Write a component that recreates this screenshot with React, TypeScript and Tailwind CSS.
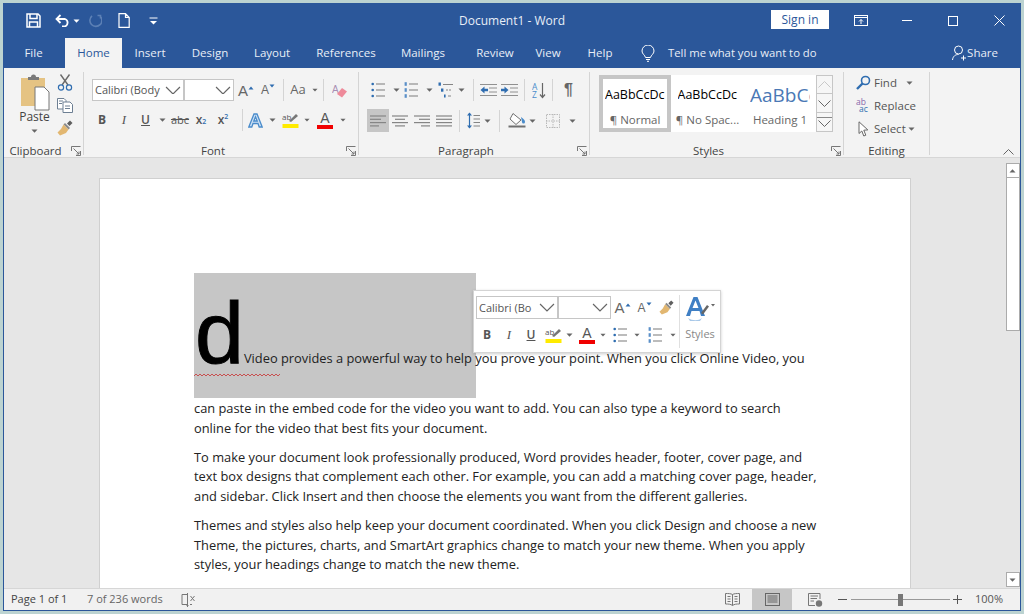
import React from "react";

const F = "font-['Open_Sans','Noto_Sans',sans-serif]";

type P = { c?: string; children?: React.ReactNode };
const C = ({ c = "", children }: P) => (
  <div className={"flex items-center justify-center shrink-0 " + c}>{children}</div>
);
const Sep = ({ c = "h-[22px]" }: { c?: string }) => <div className={"w-px shrink-0 bg-[#d4d4d4] " + c} />;
const Caret = ({ color = "#666" }: { color?: string }) => (
  <svg width="7" height="4" viewBox="0 0 7 4"><path d="M0.5 0.5h6L3.5 3.8z" fill={color} /></svg>
);
const Chevron = ({ w = 16, h = 9 }: { w?: number; h?: number }) => (
  <svg className="shrink-0" width={w} height={h} viewBox="0 0 16 9" fill="none"><path d="M1 1l7 7 7-7" stroke="#666" strokeWidth="1.2" /></svg>
);
const Launcher = () => (
  <svg width="10" height="10" viewBox="0 0 10 10" fill="none" stroke="#777">
    <path d="M0.5 5V0.5H9.5M5 9.5H9.5V5M2.5 2.5L8 8M8 5.5V8H5.5" />
  </svg>
);

const Lines = ({ kind }: { kind: "left" | "center" | "right" | "just" }) => {
  const rows = {
    left: [[2, 18], [2, 13], [2, 18], [2, 11]],
    center: [[2, 18], [5, 15], [2, 18], [5, 15]],
    right: [[2, 18], [7, 18], [2, 18], [9, 18]],
    just: [[2, 18], [2, 18], [2, 18], [2, 18]],
  }[kind];
  return (
    <svg width="16" height="14" viewBox="2 0 16 14" stroke="#858585" strokeWidth="1.2">
      {rows.map(([a, b], i) => <path key={i} d={`M${a} ${2 + i * 3.3}H${b}`} />)}
    </svg>
  );
};
const Bullets = ({ s = 1 }: { s?: number }) => (
  <svg width={14 * s} height={16 * s} viewBox="0 0 14 16">
    {[2, 8, 14].map((y) => <g key={y}><circle cx="1.7" cy={y} r="1.3" fill="#2f6db0" /><path d={`M5 ${y}H14`} stroke="#858585" strokeWidth="1.1" /></g>)}
  </svg>
);
const Numbers = ({ s = 1 }: { s?: number }) => (
  <svg width={14 * s} height={16 * s} viewBox="0 0 14 16">
    {[2, 8, 14].map((y) => <g key={y}><rect x="0.6" y={y - 1.8} width="2.2" height="3.6" fill="#5a8fc8" /><path d={`M5 ${y}H14`} stroke="#858585" strokeWidth="1.1" /></g>)}
  </svg>
);
const Multi = () => (
  <svg width="16" height="16" viewBox="0 0 16 16">
    <rect x="0.5" y="0.5" width="2.4" height="3.2" fill="#2f6db0" /><path d="M5 2.5H15" stroke="#858585" />
    <rect x="3" y="6.5" width="2.4" height="3.2" fill="#2f6db0" /><path d="M8 8H10M11 8H13" stroke="#858585" />
    <rect x="6" y="12.5" width="1.6" height="3" fill="#2f6db0" /><path d="M10 14H13" stroke="#858585" />
  </svg>
);
const Indent = ({ flip }: { flip?: boolean }) => (
  <svg width="17" height="14" viewBox="0 0 17 14">
    <g stroke="#909090"><path d="M0 1.5H17M9 5H17M9 9H17M0 12.5H17" /></g>
    {flip
      ? <path d="M0 5.7H3.5V3.5L7.5 7 3.5 10.5V8.3H0z" fill="#2f6db0" />
      : <path d="M8 5.7H4.5V3.5L0.5 7 4.5 10.5V8.3H8z" fill="#2f6db0" />}
  </svg>
);
const Brush = ({ s = 16 }: { s?: number }) => (
  <svg width={s} height={s} viewBox="0 0 16 16">
    <path d="M10 3.5l3-3 2.5 2.5-3 3z" fill="#5f5f5f" />
    <path d="M8 3l5 5-1.5 1.5-5-5z" fill="#8a8a8a" />
    <path d="M6.5 4.5l5 5-2.5 3.5L3 15.5 .5 12.5 4 9z" fill="#e2b771" />
  </svg>
);
const GrowA = ({ big, up }: { big?: boolean; up?: boolean }) => (
  <div className="relative flex items-end">
    <span className={"leading-none text-[#666] font-['Liberation_Sans',sans-serif] " + (big ? "text-[15px]" : "text-[12px]")}>A</span>
    <svg className="mb-[8px]" width="6" height="4" viewBox="0 0 6 4">
      <path d={up ? "M0.5 3.5L3 0.5l2.5 3z" : "M0.5 0.5L3 3.5l2.5-3z"} fill="#2f6db0" />
    </svg>
  </div>
);
const Highlight = () => (
  <svg width="17" height="16" viewBox="0 0 17 16" className="overflow-visible">
    <text x="0" y="8" fontSize="8" fill="#555" fontFamily="'Open Sans',sans-serif">ab</text>
    <path d="M7 9l7-7 2 2-7 6z" fill="#777" />
    <rect x="0.5" y="12" width="16" height="4" fill="#ffeb00" />
  </svg>
);
const ColorA = () => (
  <div className="flex flex-col items-center w-[16px]">
    <span className="text-[14px] leading-[13px] text-[#555] font-['Liberation_Sans',sans-serif]">A</span>
    <div className="w-[16px] h-[4px] bg-[#f00000]" />
  </div>
);
const Combo = ({ c, text, chevron = 16 }: { c: string; text?: string; chevron?: number }) => (
  <div className={"flex items-center justify-between bg-white border border-[#c6c6c6] pl-[2px] pr-[2px] text-[#555] text-[11px] overflow-hidden " + c}>
    <span className="whitespace-nowrap">{text}</span>
    <Chevron w={chevron} h={chevron * 0.56} />
  </div>
);

const Group = ({ c, label, launcher, children }: P & { label: string; launcher?: boolean }) => (
  <div className={"flex flex-col shrink-0 relative " + c}>
    <div className="flex-1 min-h-0">{children}</div>
    <div className={"h-[12px] flex items-center justify-center text-[11.5px] text-[#444] relative " + (launcher ? "pr-[16px]" : "")}>
      {label}
      {launcher && <span className="absolute right-[2px] top-[1px]"><Launcher /></span>}
    </div>
  </div>
);

const Clipboard = () => (
  <Group c="w-[79px] pt-[2px]" label="Clipboard" launcher>
    <div className="flex h-[65px]">
      <div className="w-[53px] ml-[4px] flex flex-col items-center">
        <svg width="30" height="37" viewBox="0 0 30 37">
          <rect x="1" y="4" width="24" height="28" fill="#e5c383" />
          <path d="M8 6V3h3a2.5 2.5 0 0 1 5 0h3v3z" fill="#7a7a7a" />
          <path d="M15 13h9l5 5v18H15z" fill="#fff" stroke="#777" />
        </svg>
        <span className="text-[12px] leading-[15px] mt-[-2px] text-[#444]">Paste</span>
        <div className="mt-[5px]"><Caret /></div>
      </div>
      <div className="flex flex-col items-center w-[16px] ml-[-4px]">
        <svg className="mt-0" width="16" height="17" viewBox="0 0 16 17" fill="none">
          <path d="M3.5 0.5L11 11M12.5 0.5L5 11" stroke="#6a6a6a" strokeWidth="1.4" />
          <circle cx="4" cy="13.5" r="2.6" stroke="#2f6db0" strokeWidth="1.2" />
          <circle cx="12" cy="13.5" r="2.6" stroke="#2f6db0" strokeWidth="1.2" />
        </svg>
        <svg className="mt-[7px]" width="16" height="15" viewBox="0 0 16 15" fill="#fff" stroke="#6d7f93">
          <path d="M0.5 0.5H7L9 2.5V11H0.5z" /><path d="M6 4H13L15.5 6.5V14.5H6z" />
          <path d="M8 8H13M8 10.5H13M2 3H6M2 5.5H5" />
        </svg>
        <div className="mt-[7px]"><Brush /></div>
      </div>
    </div>
  </Group>
);

const FontGroup = () => (
  <Group c="w-[274px] pt-[7px] text-[12px]" label="Font" launcher>
    <div className="flex items-center h-[22px] pl-[8px]">
      <Combo c="w-[92px] h-[22px]" text="Calibri (Body" />
      <Combo c="w-[50px] h-[22px]" />
      <C c="w-[24px]"><GrowA big up /></C>
      <C c="w-[20px]"><GrowA /></C>
      <div className="w-[5px]" /><Sep />
      <C c="w-[28px] text-[13px] text-[#666] gap-[3px]"><span>Aa</span></C>
      <C c="w-[6px]"><Caret /></C>
      <div className="w-[5px]" /><Sep />
      <C c="w-[31px]">
        <svg width="15" height="15" viewBox="0 0 15 15">
          <text x="0" y="10" fontSize="10" fill="#a98fb4" fontFamily="'Liberation Sans',sans-serif">A</text>
          <path d="M10 5l5 3.5-5 6-5-3.5z" fill="#ee8a9a" />
        </svg>
      </C>
    </div>
    <div className="flex items-center h-[22px] mt-[8px] pl-[7px] text-[#555]">
      <C c="w-[22px] font-bold text-[12px]">B</C>
      <C c="w-[22px] italic font-['Liberation_Serif',serif] text-[13px]">I</C>
      <C c="w-[21px] underline font-semibold text-[12px]">U</C>
      <C c="w-[12px]"><Caret /></C>
      <C c="w-[24px] line-through text-[11px]">abc</C>
      <C c="w-[18px] font-semibold text-[12px]">x<sub className="text-[7px] text-[#2f6db0]">2</sub></C>
      <C c="w-[26px] font-semibold text-[12px]">x<sup className="text-[7px] text-[#2f6db0]">2</sup></C>
      <div className="w-[6px]" /><Sep />
      <C c="w-[25px]">
        <svg width="15" height="15" viewBox="0 0 15 15" fill="#cfe1f4" stroke="#4a8ccb" strokeWidth="1.3"><path d="M0.8 14L6 1h3l5.2 13h-3L10 10.5H5L3.8 14zM5.8 8h3.4L7.5 3.8z" /></svg>
      </C>
      <C c="w-[8px]"><Caret /></C>
      <C c="w-[28px]"><Highlight /></C>
      <C c="w-[6px]"><Caret /></C>
      <C c="w-[30px]"><ColorA /></C>
      <C c="w-[6px]"><Caret /></C>
    </div>
  </Group>
);

const ParagraphGroup = () => (
  <Group c="w-[230px] pt-[7px]" label="Paragraph" launcher>
    <div className="flex items-center h-[22px] pl-[11px]">
      <C c="w-[16px]"><Bullets /></C>
      <C c="w-[17px] pl-[3px]"><Caret /></C>
      <C c="w-[16px]"><Numbers /></C>
      <C c="w-[18px] pl-[3px]"><Caret /></C>
      <C c="w-[18px]"><Multi /></C>
      <C c="w-[12px]"><Caret /></C>
      <div className="w-[6px]" /><Sep />
      <C c="w-[24px] pl-[5px]"><Indent /></C>
      <C c="w-[23px]"><Indent flip /></C>
      <div className="w-[3px]" /><Sep />
      <C c="w-[27px]">
        <svg width="14" height="17" viewBox="0 0 14 17">
          <text x="0" y="7.5" fontSize="8.5" fill="#4a8ccb" fontFamily="'Open Sans',sans-serif">A</text>
          <text x="0" y="16" fontSize="8.5" fill="#4a8ccb" fontFamily="'Open Sans',sans-serif">Z</text>
          <path d="M10.5 1v14M8 12.5l2.5 3 2.5-3" stroke="#666" strokeWidth="1.2" fill="none" />
        </svg>
      </C>
      <Sep />
      <C c="w-[31px] text-[16px] text-[#666] font-bold font-['Liberation_Sans',sans-serif]">¶</C>
    </div>
    <div className="flex items-center h-[23px] mt-[8px] pl-[8px]">
      <C c="w-[22px] h-[23px] bg-[#c6c6c6]"><Lines kind="left" /></C>
      <C c="w-[22px]"><Lines kind="center" /></C>
      <C c="w-[22px]"><Lines kind="right" /></C>
      <C c="w-[22px]"><Lines kind="just" /></C>
      <div className="w-[4px]" /><Sep />
      <C c="w-[23px] pl-[3px]">
        <svg width="13" height="17" viewBox="0 0 13 17">
          <path d="M2.5 1v15" stroke="#2f6db0" strokeWidth="1.2" />
          <path d="M0 3.5L2.5 0.5 5 3.5zM0 13.5L2.5 16.5 5 13.5z" fill="#2f6db0" />
          <path d="M6.5 3.5H13M6.5 7H13M6.5 10.5H13M6.5 14H13" stroke="#858585" />
        </svg>
      </C>
      <C c="w-[9px]"><Caret /></C>
      <div className="w-[7px]" /><Sep />
      <C c="w-[28px] pl-[5px]">
        <svg width="18" height="17" viewBox="0 0 18 17" fill="none">
          <path d="M5 1.5L13 8l-5 4.5L2 7z" stroke="#707070" fill="#fff" />
          <path d="M13 5c3 2 4 3.5 4 5a1.5 1.5 0 0 1-3 0z" fill="#4a8ccb" />
          <path d="M0.5 14.5H17.5" stroke="#707070" strokeWidth="2" />
        </svg>
      </C>
      <C c="w-[8px]"><Caret /></C>
      <C c="w-[25px] pl-[8px]">
        <svg width="14" height="14" viewBox="0 0 14 14" fill="none" stroke="#b8b8b8" strokeDasharray="1.5 1"><rect x="0.5" y="0.5" width="13" height="13" /><path d="M7 0V14M0 7H14" /></svg>
      </C>
      <C c="w-[16px] pl-[6px]"><Caret /></C>
    </div>
  </Group>
);

const ScrollBtn = ({ c, dim, up, bar }: { c: string; dim?: boolean; up?: boolean; bar?: boolean }) => (
  <div className={"w-[17px] border border-[#c6c6c6] flex flex-col items-center justify-center bg-[#f6f6f6] " + c}>
    {bar && <div className="w-full h-px bg-[#888] mb-[2px]" />}
    <svg width="13" height="7" viewBox="0 0 13 7" fill="none">
      <path d={up ? "M0.5 6.5l6-6 6 6" : "M0.5 0.5l6 6 6-6"} stroke={dim ? "#c8c8c8" : "#666"} />
    </svg>
  </div>
);

const StylesGroup = () => (
  <Group c="w-[253px] pt-[3px]" label="Styles" launcher>
    <div className="flex ml-[9px] w-[234px] h-[57px]">
      <div className="w-[72px] h-[57px] border-[4px] border-[#c6c6c6] bg-white flex flex-col items-center overflow-hidden">
        <div className="h-[33px] w-[60px] flex items-center overflow-hidden text-[12.5px] text-black whitespace-nowrap">AaBbCcDc</div>
        <span className="text-[11.5px] leading-[16px] text-[#666] whitespace-nowrap">¶ Normal</span>
      </div>
      <div className="w-[73px] h-[57px] bg-white flex flex-col items-center overflow-hidden">
        <div className="h-[37px] w-[60px] pt-[4px] flex items-center overflow-hidden text-[12.5px] text-black whitespace-nowrap">AaBbCcDc</div>
        <span className="text-[11.5px] leading-[16px] text-[#666] whitespace-nowrap">¶ No Spac...</span>
      </div>
      <div className="w-[72px] h-[57px] bg-white flex flex-col items-center overflow-hidden">
        <div className="h-[37px] w-[60px] pt-[4px] flex items-center overflow-hidden text-[19px] text-[#4a78b5] whitespace-nowrap">AaBbCc</div>
        <span className="text-[11.5px] leading-[16px] text-[#666] whitespace-nowrap">Heading 1</span>
      </div>
      <div className="flex flex-col">
        <ScrollBtn c="h-[19px]" dim up />
        <ScrollBtn c="h-[20px] -mt-px" />
        <ScrollBtn c="h-[20px] -mt-px" bar />
      </div>
    </div>
  </Group>
);

const EditingGroup = () => (
  <Group c="w-[85px] pt-[1px] text-[11.5px] text-[#555]" label="Editing">
    <div className="flex flex-col gap-[4px] pl-[8px]">
      <div className="flex items-center h-[19px]">
        <C c="w-[22px]">
          <svg width="15" height="15" viewBox="0 0 15 15" fill="none" stroke="#2f6db0"><circle cx="9.5" cy="5.5" r="4" strokeWidth="1.6" /><path d="M6.5 8.5L1 14" strokeWidth="2.4" /></svg>
        </C>
        <span>Find</span><span className="ml-[9px]"><Caret /></span>
      </div>
      <div className="flex items-center h-[19px]">
        <C c="w-[22px]">
          <svg width="17" height="17" viewBox="0 0 17 17">
            <text x="1" y="8" fontSize="8.5" fill="#8866aa" fontFamily="'Open Sans',sans-serif">ab</text>
            <text x="4" y="15" fontSize="8.5" fill="#2f6db0" fontFamily="'Open Sans',sans-serif">ac</text>
          </svg>
        </C>
        <span>Replace</span>
      </div>
      <div className="flex items-center h-[19px]">
        <C c="w-[22px]">
          <svg width="11" height="16" viewBox="0 0 11 16" fill="#fff" stroke="#666"><path d="M1 0.8V12.5L3.8 10l2 5 2-0.8-2-5 4 -0.3z" /></svg>
        </C>
        <span>Select</span><span className="ml-[2px]"><Caret /></span>
      </div>
    </div>
  </Group>
);

const Tab = ({ c, children }: P) => <div className={"shrink-0 text-center " + c}>{children}</div>;

const Para = ({ children, c = "" }: P) => <p className={"mb-[9.5px] " + c}>{children}</p>;

const MiniToolbar = () => (
  <div className="absolute left-[373px] top-[111px] w-[248px] h-[63px] bg-white border border-[#d4d4d4] shadow-[0_1px_3px_rgba(0,0,0,0.2)] flex text-[12px] text-[#666]">
    <div className="w-[205px] pl-[2px] pt-[5px]">
      <div className="flex items-center h-[23px]">
        <Combo c="w-[82px] h-[23px]" text="Calibri (Bo" />
        <Combo c="w-[53px] h-[23px]" />
        <C c="w-[23px]"><GrowA big up /></C>
        <C c="w-[21px]"><GrowA /></C>
        <C c="w-[23px]"><Brush s={15} /></C>
      </div>
      <div className="flex items-center h-[22px] mt-[5px]">
        <C c="w-[22px] font-bold text-[#555]">B</C>
        <C c="w-[22px] italic font-['Liberation_Serif',serif] text-[13px] text-[#555]">I</C>
        <C c="w-[22px] underline font-semibold text-[#555]">U</C>
        <C c="w-[22px]"><Highlight /></C>
        <C c="w-[10px]"><Caret /></C>
        <C c="w-[26px]"><ColorA /></C>
        <C c="w-[6px]"><Caret /></C>
        <C c="w-[28px]"><Bullets /></C>
        <C c="w-[6px]"><Caret /></C>
        <C c="w-[30px]"><Numbers /></C>
        <C c="w-[6px]"><Caret /></C>
      </div>
    </div>
    <div className="w-px my-[4px] bg-[#e0e0e0]" />
    <div className="flex-1 flex flex-col items-center pt-[5px]">
      <svg width="30" height="26" viewBox="0 0 30 26">
        <path d="M1 20L8.5 1h4L20 20h-4l-1.5-5h-8L5 20zM7.5 12h6L10.5 4.5z" fill="#3f7fc4" />
        <path d="M3 22c5 3 10 3 14 0l-2 3H5z" fill="#a8c8e8" />
        <path d="M16 17l6-8 2 1.5-6 8z" fill="#666" />
        <path d="M26 8h4l-2 2.5z" fill="#666" />
      </svg>
      <span className="text-[11px] mt-[5px] leading-[14px] text-[#888]">Styles</span>
    </div>
  </div>
);

export default function App() {
  return (
    <div className={"w-[1024px] h-[614px] overflow-hidden bg-[#bcd3d1] pt-[3px] px-[3px] " + F}>
      <div className="h-[608px] flex flex-col bg-[#e6e6e6] border-b border-x border-[#2b579a]">
        {/* title bar */}
        <div className="h-[35px] shrink-0 bg-[#2b579a] flex items-center text-white relative">
          <C c="w-[25px] ml-[17px]">
            <svg width="15" height="15" viewBox="0 0 15 15" fill="none" stroke="#fff" strokeWidth="1.5"><path d="M1 1H12L14 3V14H1z" /><path d="M4 1V5.5H11V1M3.5 14V9H11.5V14" /></svg>
          </C>
          <C c="w-[20px] ml-[7px]">
            <svg width="16" height="13" viewBox="0 0 16 13" fill="none" stroke="#fff" strokeWidth="1.8"><path d="M1.5 5H10a4 4 0 0 1 0 7.5H7" /><path d="M5.5 1L1.5 5l4 4" /></svg>
          </C>
          <C c="w-[8px] ml-[-1px]"><Caret color="#fff" /></C>
          <C c="w-[16px] ml-[7px]">
            <svg width="14" height="14" viewBox="0 0 14 14" fill="none" stroke="#5c80b5" strokeWidth="1.6"><path d="M9.5 1.5H12.5V4.5M12 2A6 6 0 1 1 4 1.8" /></svg>
          </C>
          <C c="w-[16px] ml-[13px]">
            <svg width="12" height="15" viewBox="0 0 12 15" fill="none" stroke="#fff" strokeWidth="1.2"><path d="M1 0.7H7.5L11.2 4.4V14.3H1zM7.5 0.7V4.4H11.2" /></svg>
          </C>
          <C c="w-[10px] ml-[16px]">
            <svg width="9" height="8" viewBox="0 0 9 8" fill="none" stroke="#fff"><path d="M0.5 1H8.5" /><path d="M1 4h7L4.5 7.5z" fill="#fff" stroke="none" /></svg>
          </C>
          <div className="absolute left-[0] right-[0] text-center text-[12px] text-[#e8eef7] pointer-events-none">Document1  -  Word</div>
          <div className="ml-auto flex items-center">
            <div className="w-[58px] h-[19px] -mt-[2px] bg-white text-[#2b579a] text-[12px] flex items-center justify-center">Sign in</div>
            <C c="w-[64px]">
              <svg width="14" height="11" viewBox="0 0 14 11" fill="none" stroke="#fff"><rect x="0.5" y="0.5" width="13" height="10" /><path d="M0.5 2.5H13.5M7 9V4.5M5 6.5l2-2 2 2" /></svg>
            </C>
            <C c="w-[28px]"><div className="w-[10px] h-px bg-white" /></C>
            <C c="w-[64px]"><div className="w-[10px] h-[10px] border border-white" /></C>
            <C c="w-[28px] mr-[7px]">
              <svg width="11" height="11" viewBox="0 0 11 11" stroke="#fff"><path d="M0.5 0.5L10.5 10.5M10.5 0.5L0.5 10.5" /></svg>
            </C>
          </div>
        </div>
        {/* tabs */}
        <div className="h-[30px] shrink-0 bg-[#2b579a] flex items-center text-[11.5px] text-[#e8eef7]">
          <Tab c="w-[61px] pr-[2px]">File</Tab>
          <Tab c="w-[57px] h-[30px] leading-[30px] bg-[#f3f3f3] text-[#2b579a]">Home</Tab>
          <Tab c="w-[56px]">Insert</Tab>
          <Tab c="w-[64px]">Design</Tab>
          <Tab c="w-[60px]">Layout</Tab>
          <Tab c="w-[88px]">References</Tab>
          <Tab c="w-[66px]">Mailings</Tab>
          <Tab c="w-[78px]">Review</Tab>
          <Tab c="w-[28px]">View</Tab>
          <Tab c="w-[76px]">Help</Tab>
          <C c="w-[20px]">
            <svg width="14" height="17" viewBox="0 0 14 17" fill="none" stroke="#fff"><path d="M4.5 12.5C4 10 1 9 1 6a6 6 0 0 1 12 0c0 3-3 4-3.5 6.5zM5 14.5H9M6 16.3H8" /></svg>
          </C>
          <span className="ml-[10px] text-[11.3px]">Tell me what you want to do</span>
          <div className="ml-auto flex items-center mr-[22px]">
            <svg width="15" height="16" viewBox="0 0 15 16" fill="none" stroke="#fff"><circle cx="6.5" cy="5" r="4" /><path d="M0.5 15C1 11 3.5 9.5 6.5 9.5M11.5 10.5V15.5M9 13H14" /></svg>
            <span>Share</span>
          </div>
        </div>
        {/* ribbon */}
        <div className="h-[90px] shrink-0 bg-[#f3f3f3] border-b border-[#d6d6d6] flex items-stretch pt-[4px] relative">
          <Clipboard />
          <Sep c="mb-[2px]" />
          <FontGroup />
          <Sep c="mb-[2px]" />
          <ParagraphGroup />
          <Sep c="mb-[2px]" />
          <StylesGroup />
          <Sep c="mb-[2px]" />
          <EditingGroup />
          <Sep c="mb-[2px]" />
          <div className="flex-1 flex items-end justify-end pr-[6px] pb-[2px]">
            <svg width="11" height="6" viewBox="0 0 11 6" fill="none" stroke="#666"><path d="M0.5 5.5l5-5 5 5" /></svg>
          </div>
        </div>
        {/* document area */}
        <div className="flex-1 min-h-0 flex">
          <div className="flex-1 min-w-0 pl-[95px] pt-[20px] overflow-hidden">
            <div className="relative w-[812px] h-[420px] bg-white border border-[#d0d0d0] pl-[94px] pt-[94px] pr-[91px] text-[12.85px] leading-[19.6px] text-[#222]">
              <div className="h-[125px] pt-[10px] w-[625px] bg-[linear-gradient(#c6c6c6,#c6c6c6)] bg-no-repeat bg-[length:282px_100%] relative whitespace-nowrap">
                <span className="font-['Liberation_Sans',sans-serif] text-[88px] leading-[100px] text-black pl-[1px] [-webkit-text-stroke:1px_black]">d</span>
                <span>Video provides a powerful way to help you prove your point. When you click Online Video, you</span>
                <svg className="absolute left-0 top-[100px]" width="86" height="4" viewBox="0 0 86 4" fill="none" stroke="#c83232" strokeWidth="0.8">
                  <path d="M0 3 2 1 4 3 6 1 8 3 10 1 12 3 14 1 16 3 18 1 20 3 22 1 24 3 26 1 28 3 30 1 32 3 34 1 36 3 38 1 40 3 42 1 44 3 46 1 48 3 50 1 52 3 54 1 56 3 58 1 60 3 62 1 64 3 66 1 68 3 70 1 72 3 74 1 76 3 78 1 80 3 82 1 84 3 86 1" />
                </svg>
              </div>
              <Para c="mt-[1px]">can paste in the embed code for the video you want to add. You can also type a keyword to search online for the video that best fits your document.</Para>
              <Para>To make your document look professionally produced, Word provides header, footer, cover page, and text box designs that complement each other. For example, you can add a matching cover page, header, and sidebar. Click Insert and then choose the elements you want from the different galleries.</Para>
              <Para>Themes and styles also help keep your document coordinated. When you click Design and choose a new Theme, the pictures, charts, and SmartArt graphics change to match your new theme. When you apply styles, your headings change to match the new theme.</Para>
              <Para>Save time in Word with new buttons that show up where you need them. To change the way a picture</Para>
              <MiniToolbar />
            </div>
          </div>
          <div className="w-[15px] shrink-0 flex flex-col items-center pt-[5px] pb-[1px] bg-[#e6e6e6]">
            <div className="w-[14px] h-[15px] bg-white border border-[#ababab] flex items-center justify-center">
              <svg width="7" height="4" viewBox="0 0 7 4"><path d="M0.5 3.5h6L3.5 0.2z" fill="#666" /></svg>
            </div>
            <div className="w-[14px] h-[154px] bg-white border border-[#ababab] -mt-px" />
            <div className="flex-1" />
            <div className="w-[14px] h-[15px] bg-white border border-[#ababab] flex items-center justify-center"><Caret /></div>
          </div>
        </div>
        {/* status bar */}
        <div className="h-[22px] shrink-0 bg-[#f1f1f1] border-t border-[#d6d6d6] flex items-center text-[11px] text-[#444]">
          <span className="ml-[7px] w-[76px]">Page 1 of 1</span>
          <span className="w-[94px] text-[#666]">7 of 236 words</span>
          <svg width="15" height="14" viewBox="0 0 15 14" fill="none" stroke="#777"><path d="M6 1.5H1V11.5H6M6.5 0V14M9 11.5H11M5.5 12.5l1 1 1-1" /><path d="M9.5 3l4 5M13.5 3l-4 5" /></svg>
          <div className="ml-auto flex items-center h-full">
            <C c="w-[40px] h-full">
              <svg width="15" height="13" viewBox="0 0 15 13" fill="none" stroke="#777"><path d="M7.5 1.5C6 .5 3 .5.5.5V11c3 0 5 0 7 1.5 2-1.5 4-1.5 7-1.5V.5c-2.5 0-5.5 0-7 1zM7.5 1.5V12.5M2.5 3.5H5.5M2.5 6H5.5M2.5 8.5H5.5M9.5 3.5H12.5M9.5 6H12.5M9.5 8.5H12.5" /></svg>
            </C>
            <C c="w-[40px] h-full bg-[#c6c6c6]">
              <svg width="15" height="13" viewBox="0 0 15 13" fill="none" stroke="#666"><rect x="0.5" y="0.5" width="14" height="12" /><path d="M2.5 3H12.5M2.5 5H12.5M2.5 7H12.5M2.5 9H12.5" /></svg>
            </C>
            <C c="w-[46px] h-full">
              <svg width="15" height="14" viewBox="0 0 15 14" fill="none" stroke="#777"><path d="M7 12.5H.5V.5H12V6M2.5 3H10M2.5 5.5H9M2.5 8H6" /><circle cx="11" cy="10.5" r="3.2" fill="#777" stroke="none" /></svg>
            </C>
            <span className="w-[9px] h-px bg-[#555]" />
            <div className="w-[99px] h-px bg-[#999] ml-[4px] flex items-center justify-center relative">
              <div className="w-[5px] h-[12px] bg-[#777]" />
            </div>
            <span className="w-[9px] h-[9px] ml-[3px] flex items-center justify-center relative">
              <span className="absolute w-[9px] h-px bg-[#555]" /><span className="absolute w-px h-[9px] bg-[#555]" />
            </span>
            <span className="w-[45px] mr-[2px] text-right pr-[15px] whitespace-nowrap text-[#555] ml-[11px]">100%</span>
          </div>
        </div>
      </div>
    </div>
  );
}
